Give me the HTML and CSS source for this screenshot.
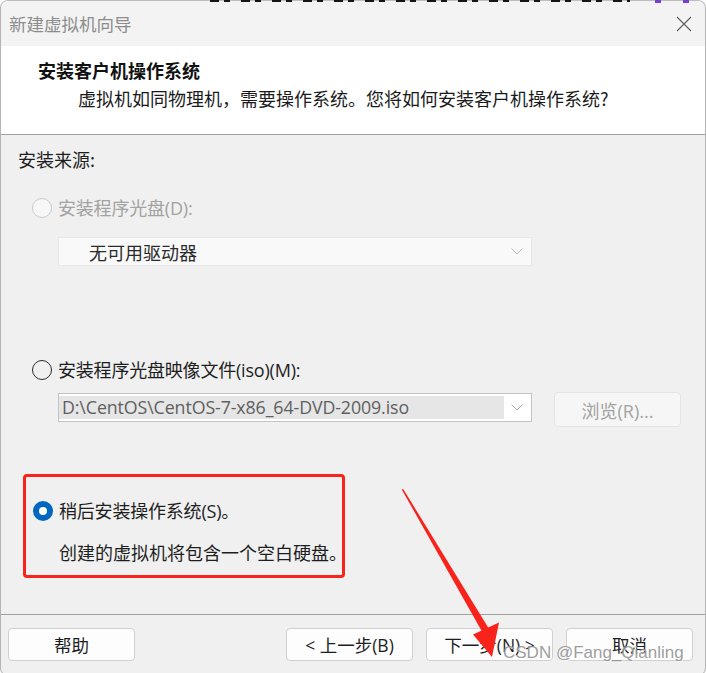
FILE: index.html
```html
<!DOCTYPE html>
<html lang="zh-CN">
<head>
<meta charset="utf-8">
<title>新建虚拟机向导</title>
<link rel="stylesheet" href="styles.css">
</head>
<body>
<div class="bgstrip"></div>
<div class="window">
  <div class="titlebar">
    <span class="title">新建虚拟机向导</span>
    <svg class="close" width="16" height="16" viewBox="0 0 16 16"><path d="M1 1 L15 15 M15 1 L1 15" stroke="#5c5c5c" stroke-width="1.1" fill="none"/></svg>
  </div>
  <div class="header">
    <div class="h-title">安装客户机操作系统</div>
    <div class="h-sub">虚拟机如同物理机，需要操作系统。您将如何安装客户机操作系统?</div>
  </div>
  <div class="content">
    <div class="source-label">安装来源:</div>

    <div class="opt opt-disc">
      <span class="radio radio-disabled"></span>
      <span class="label label-disabled">安装程序光盘(D):</span>
    </div>
    <div class="combo combo-disabled">
      <span class="combo-text">无可用驱动器</span>
      <svg class="chev" width="12" height="7" viewBox="0 0 12 7"><path d="M0.5 0.5 L6 6 L11.5 0.5" stroke="#b8b8b8" stroke-width="1" fill="none"/></svg>
    </div>

    <div class="opt opt-iso">
      <span class="radio"></span>
      <span class="label">安装程序光盘映像文件(iso)(M):</span>
    </div>
    <div class="iso-row">
      <div class="combo combo-iso">
        <span class="iso-value">D:\CentOS\CentOS-7-x86_64-DVD-2009.iso</span>
        <svg class="chev" width="12" height="7" viewBox="0 0 12 7"><path d="M0.5 0.5 L6 6 L11.5 0.5" stroke="#b0b0b0" stroke-width="1" fill="none"/></svg>
      </div>
      <div class="browse">浏览(R)...</div>
    </div>

    <div class="later-box">
      <div class="opt opt-later">
        <span class="radio radio-checked"></span>
        <span class="label">稍后安装操作系统(S)。</span>
      </div>
      <div class="later-desc">创建的虚拟机将包含一个空白硬盘。</div>
    </div>
  </div>
  <div class="footer">
    <div class="btn">帮助</div>
    <div class="nav">
      <div class="btn">&lt; 上一步(B)</div>
      <div class="btn">下一步(N) &gt;</div>
      <div class="btn">取消</div>
    </div>
  </div>
</div>
<svg class="arrow" width="706" height="673" viewBox="0 0 706 673">
  <polygon points="401.5,489 403.5,489.5 488.5,628 482,631.5" fill="#f8231b"/>
  <polygon points="473,634.5 499,622.5 492,657" fill="#f8231b"/>
</svg>
<div class="watermark">CSDN @Fang_Qianling</div>
</body>
</html>
```
FILE: styles.css
```css
html, body {
  margin: 0;
  padding: 0;
}
body {
  width: 706px;
  height: 673px;
  overflow: hidden;
  background: #ffffff;
  position: relative;
  font-family: "Open Sans", "Noto Sans CJK SC", sans-serif;
  color: #1e1e1e;
}
.bgstrip {
  position: absolute;
  left: 210px;
  top: 0;
  width: 420px;
  height: 2px;
  background: repeating-linear-gradient(90deg, #151515 0 9px, transparent 9px 14px, #151515 14px 20px, transparent 20px 31px);
  z-index: 2;
}
.bgstrip::after {
  content: "";
  position: absolute;
  left: 445px;
  top: 0;
  width: 36px;
  height: 3px;
  background: linear-gradient(90deg, #7b3fd0 0 6px, transparent 6px 28px, #7b3fd0 28px 34px, transparent 34px);
}
.window {
  box-sizing: border-box;
  width: 706px;
  height: 676px;
  border: 1px solid #b4b4b4;
  border-top-color: #bdbdbd;
  border-radius: 8px;
  background: #f0f0f0;
  overflow: hidden;
  display: flex;
  flex-direction: column;
}
.titlebar {
  height: 45px;
  background: #f3f3f3;
  display: flex;
  align-items: center;
  justify-content: space-between;
  padding: 0 13px 0 8px;
  flex: none;
}
.title {
  font-family: "Noto Sans CJK SC", sans-serif;
  font-size: 17.5px;
  color: #8c8c8c;
  line-height: 22px;
  margin-top: 1px;
}
.close {
  display: block;
  margin-top: 1px;
}
.header {
  height: 88px;
  background: #ffffff;
  border-bottom: 1px solid #a0a0a0;
  flex: none;
  padding-left: 37px;
}
.h-title {
  font-family: "Noto Sans CJK SC", sans-serif;
  font-weight: bold;
  font-size: 18px;
  line-height: 22px;
  padding-top: 13px;
  color: #111;
}
.h-sub {
  font-family: "Noto Sans CJK SC", sans-serif;
  font-size: 18px;
  line-height: 22px;
  margin-top: 6px;
  padding-left: 40px;
  color: #1a1a1a;
}
.content {
  flex: none;
  height: 479px;
  padding-left: 17px;
  border-bottom: 1px solid #a0a0a0;
}
.source-label {
  font-family: "Noto Sans CJK SC", sans-serif;
  font-size: 18px;
  line-height: 22px;
  padding-top: 13px;
}
.opt {
  display: flex;
  align-items: center;
  height: 22px;
}
.opt-disc {
  margin-top: 27px;
  padding-left: 14px;
}
.opt-iso {
  margin-top: 93px;
  padding-left: 14px;
}
.radio {
  box-sizing: border-box;
  width: 20px;
  height: 20px;
  border-radius: 50%;
  border: 1.2px solid #2a2a2a;
  flex: none;
  margin-right: 6px;
}
.radio-disabled {
  border: 1px solid #c9c9c9;
  background: #f7f7f7;
}
.radio-checked {
  border: none;
  background: #0067c0;
  position: relative;
}
.radio-checked::after {
  content: "";
  position: absolute;
  left: 6px;
  top: 6px;
  width: 8px;
  height: 8px;
  border-radius: 50%;
  background: #ffffff;
}
.label {
  font-size: 18px;
  line-height: 22px;
  letter-spacing: -0.2px;
  white-space: nowrap;
}
.label-disabled {
  color: #a2a2a2;
}
.combo {
  box-sizing: border-box;
  width: 474px;
  height: 29px;
  margin-left: 40px;
  display: flex;
  align-items: center;
  justify-content: space-between;
}
.combo-disabled {
  margin-top: 18px;
  background: #f9f9f9;
  border: 1px solid #e7e7e7;
  padding: 0 8px 0 30px;
}
.combo-text {
  font-family: "Noto Sans CJK SC", sans-serif;
  font-size: 18px;
  line-height: 22px;
  color: #2a2a2a;
}
.iso-row {
  display: flex;
  align-items: flex-start;
  margin-top: 11px;
}
.combo-iso {
  margin-top: 1px;
  background: #ffffff;
  border: 1px solid #c3c3c3;
  padding: 2px 8px 2px 0;
}
.iso-value {
  box-sizing: border-box;
  background: #e6e6e6;
  width: 445px;
  height: 23px;
  padding-left: 3px;
  font-family: "Open Sans", sans-serif;
  font-size: 17.8px;
  line-height: 23px;
  color: #5f5f5f;
  letter-spacing: -0.1px;
  white-space: nowrap;
  overflow: hidden;
}
.browse {
  box-sizing: border-box;
  width: 127px;
  height: 35px;
  margin-left: 22px;
  background: #f6f6f6;
  border: 1px solid #e4e4e4;
  border-radius: 4px;
  display: flex;
  align-items: center;
  justify-content: center;
  font-size: 18px;
  color: #a3a3a3;
}
.later-box {
  box-sizing: border-box;
  width: 322px;
  height: 104px;
  margin-top: 47px;
  margin-left: 5px;
  border: 3px solid #f8231b;
  border-radius: 4px;
  padding: 23px 0 0 7px;
}
.later-desc {
  font-family: "Noto Sans CJK SC", sans-serif;
  font-size: 18px;
  line-height: 22px;
  margin-top: 19px;
  padding-left: 26px;
  white-space: nowrap;
}
.footer {
  flex: none;
  display: flex;
  justify-content: space-between;
  padding: 13px 12px 0 7px;
}
.nav {
  display: flex;
  gap: 13px;
}
.btn {
  box-sizing: border-box;
  width: 127px;
  height: 33px;
  background: #fdfdfd;
  border: 1px solid #d0d0d0;
  border-radius: 4px;
  display: flex;
  align-items: center;
  justify-content: center;
  font-size: 17.5px;
  line-height: 22px;
  color: #1e1e1e;
  white-space: nowrap;
}
.arrow {
  position: absolute;
  left: 0;
  top: 0;
  pointer-events: none;
  z-index: 3;
}
.watermark {
  position: absolute;
  left: 503px;
  top: 642px;
  font-family: "Liberation Sans", sans-serif;
  font-size: 17px;
  line-height: 22px;
  color: rgba(145, 145, 145, 0.9);
  text-shadow: 1px 1px 0 rgba(255, 255, 255, 0.7);
  white-space: nowrap;
  z-index: 4;
}
```
